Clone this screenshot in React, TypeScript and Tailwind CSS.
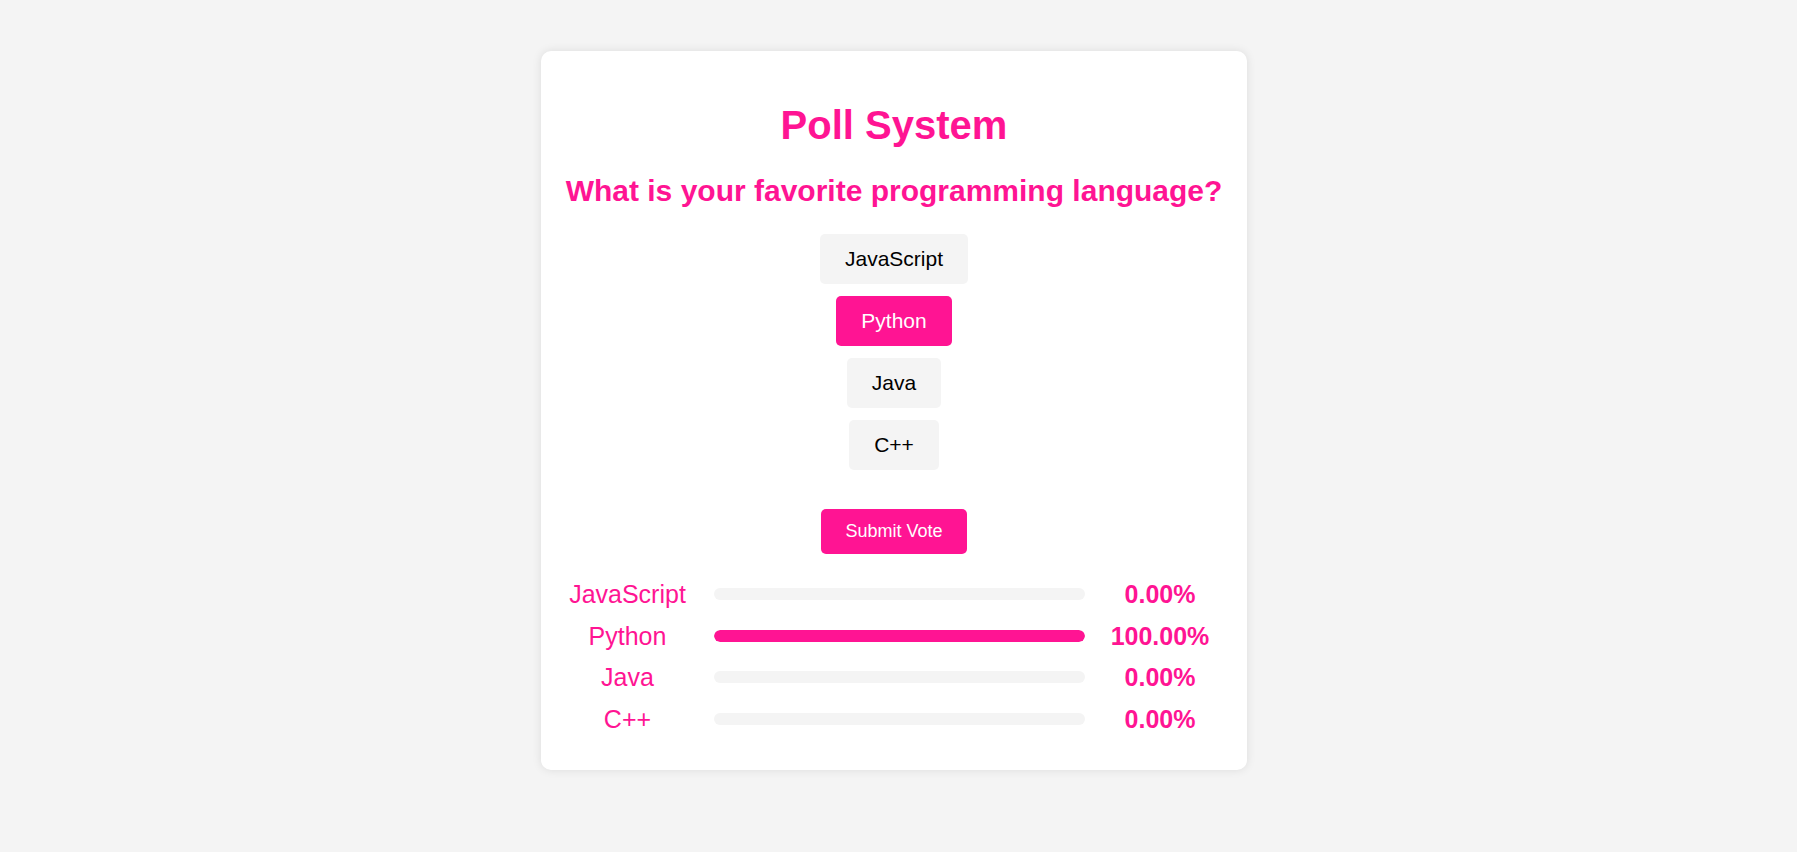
import React, { useState } from "react";

const options = ["JavaScript", "Python", "Java", "C++"];

const results = [
    { name: "JavaScript", pct: 0 },
    { name: "Python", pct: 100 },
    { name: "Java", pct: 0 },
    { name: "C++", pct: 0 },
];

const App = () => {
    const [selected, setSelected] = useState("Python");

    return (
        <div className="min-h-screen bg-[#f4f4f4] pt-[51px] font-['Liberation_Sans',Arial,sans-serif]">
            <div className="flex justify-center pr-[9px]">

                {/* POLL CARD */}
                <div className="w-[706px] bg-white rounded-[10px] shadow-[0_0_10px_rgba(0,0,0,0.1)] px-[20px] pt-[51px] pb-[37px] flex flex-col items-center">
                    <h1 className="text-[40px] leading-[46px] font-bold text-[#ff1493]">Poll System</h1>
                    <h2 className="mt-[26px] text-[30px] leading-[34px] font-bold text-[#ff1493]">
                        What is your favorite programming language?
                    </h2>

                    {/* OPTIONS */}
                    <div className="mt-[26px] flex flex-col items-center gap-[12px]">
                        {options.map((opt) => (
                            <button
                                key={opt}
                                onClick={() => setSelected(opt)}
                                className={
                                    selected === opt
                                        ? "h-[50px] px-[25px] rounded-[5px] text-[21px] bg-[#ff1493] text-white"
                                        : "h-[50px] px-[25px] rounded-[5px] text-[21px] bg-[#f4f4f4] text-black"
                                }
                            >
                                {opt}
                            </button>
                        ))}
                    </div>

                    <button className="mt-[39px] h-[45px] px-[24px] rounded-[5px] bg-[#ff1493] text-white text-[18px]">
                        Submit Vote
                    </button>

                    {/* RESULTS */}
                    <div className="mt-[26px] w-full flex flex-col gap-[13.5px]">
                        {results.map((r) => (
                            <div key={r.name} className="flex items-center h-[28px]">
                                <span className="w-[133px] text-center text-[25px] leading-[28px] text-[#ff1493]">{r.name}</span>
                                <div className="ml-[20px] w-[371px] h-[12px] rounded-full bg-[#f4f4f4] overflow-hidden">
                                    <div className="h-full rounded-full bg-[#ff1493]" style={{ width: `${r.pct}%` }} />
                                </div>
                                <span className="ml-[8px] w-[134px] text-center text-[25px] leading-[28px] font-bold text-[#ff1493]">
                                    {r.pct.toFixed(2)}%
                                </span>
                            </div>
                        ))}
                    </div>
                </div>

            </div>
        </div>
    );
};

export default App;
